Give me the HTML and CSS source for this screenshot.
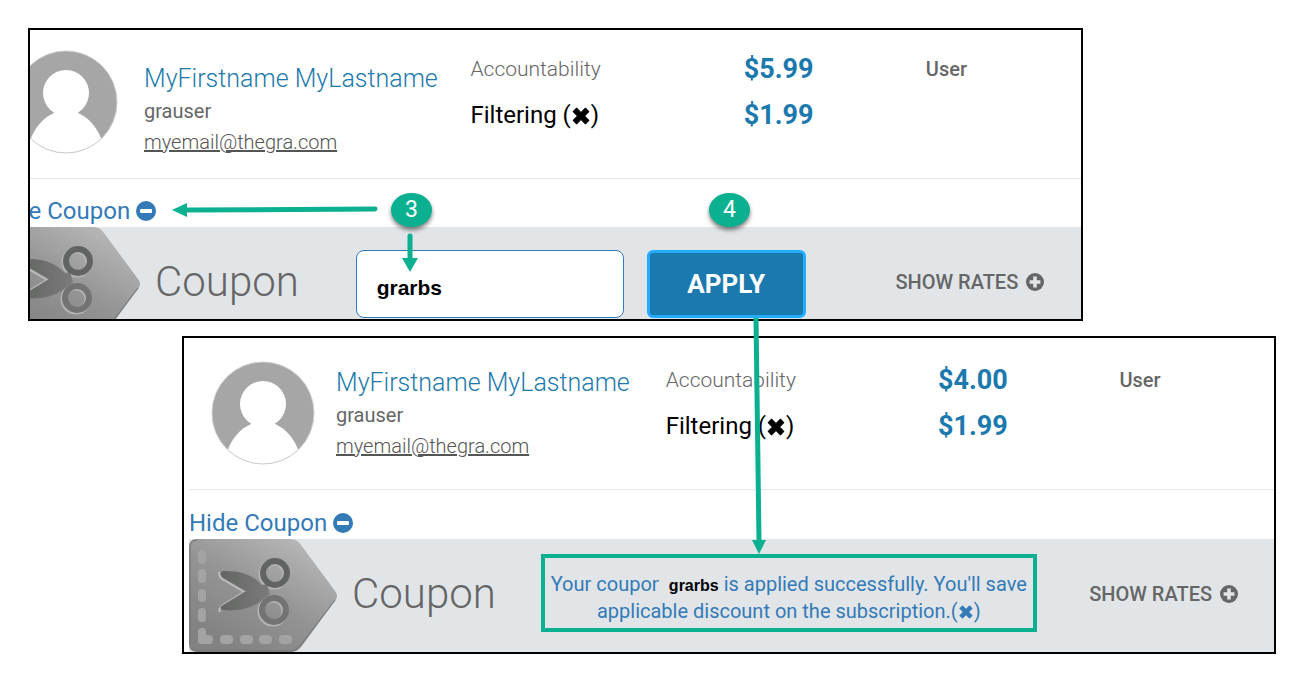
FILE: index.html
```
<!DOCTYPE html>
<html lang="en">
<head>
    <meta charset="UTF-8">
    <meta name="viewport" content="width=device-width, initial-scale=1">
    <title>Apply a coupon</title>
    <link rel="stylesheet" href="styles.css">
</head>
<body>
    <!-- shared icons -->
    <svg class="sprite" aria-hidden="true">
        <defs>
            <linearGradient id="tag-fill" x1="0.2" y1="0.9" x2="0.8" y2="0.1">
                <stop offset="0" stop-color="#828282"/>
                <stop offset="0.5" stop-color="#949494"/>
                <stop offset="1" stop-color="#b4b4b4"/>
            </linearGradient>
            <linearGradient id="blade-fill" x1="0" y1="0" x2="1" y2="0">
                <stop offset="0" stop-color="#646664"/>
                <stop offset="1" stop-color="#7a7b7a"/>
            </linearGradient>
        </defs>
        <symbol id="icon-avatar" viewBox="0 0 104 104">
            <clipPath id="avatar-clip"><circle cx="52" cy="52" r="51"/></clipPath>
            <circle cx="52" cy="52" r="51" fill="#a6a6a6"/>
            <g clip-path="url(#avatar-clip)" fill="#fff">
                <circle cx="52" cy="43" r="23"/>
                <path d="M40 60V63C28 68 20 79 16 91V106H88V91C84 79 76 68 64 63V60Z"/>
            </g>
            <circle cx="52" cy="52" r="51" fill="none" stroke="#ccc"/>
        </symbol>
        <symbol id="icon-tag" viewBox="0 0 148 113">
            <path d="M8 0H102Q108 0 112 6L146 52Q150 57 146 62L112 108Q108 113 102 113H8Q0 113 0 105V8Q0 0 8 0Z" fill="url(#tag-fill)"/>
            <path d="M1 105V8Q1 1 8 1M3 110Q5 112 9 112H102Q107 112 111 107L146 61" fill="none" stroke="#737373" stroke-width="1"/>
            <g fill="#a3a3a3">
                <rect x="9" y="11" width="8" height="14" rx="4"/>
                <rect x="9" y="30" width="8" height="14" rx="4"/>
                <rect x="9" y="50" width="8" height="13" rx="4"/>
                <rect x="9" y="69" width="8" height="14" rx="4"/>
                <path d="M9 93Q9 89 13 89T17 93V96H20Q24 96 24 100.500T20 105H12Q9 105 9 102Z"/>
                <rect x="31" y="96" width="13" height="9" rx="4"/>
                <rect x="51" y="96" width="13" height="9" rx="4"/>
                <rect x="70" y="96" width="13" height="9" rx="4"/>
                <rect x="90" y="96" width="13" height="9" rx="4"/>
            </g>
            <g fill="none" stroke="#b5b5b5" stroke-width="7">
                <circle cx="85" cy="35" r="12"/>
                <circle cx="84" cy="72" r="12"/>
            </g>
            <path d="M30 33Q30 39 35 41L55 53L34 66Q29 70 31 73" fill="none" stroke="#bcbcbc" stroke-width="2"/>
            <path d="M34 32C52 31 65 37 73 46L78 45L81 55L76 59C66 68 52 73 34 71Q29 69 34 66L57 52L34 39Q29 34 34 32Z" fill="url(#blade-fill)"/>
            <circle cx="86" cy="34" r="12" fill="none" stroke="#626463" stroke-width="6"/>
            <circle cx="85" cy="71" r="12" fill="none" stroke="#727372" stroke-width="6"/>
        </symbol>
        <symbol id="icon-minus" viewBox="0 0 20 20">
            <circle cx="10" cy="10" r="10" fill="currentColor"/>
            <rect x="4" y="8" width="12" height="4" rx="1" fill="#fff"/>
        </symbol>
        <symbol id="icon-plus" viewBox="0 0 20 20">
            <circle cx="10" cy="10" r="10" fill="currentColor"/>
            <path d="M8 4H12V8H16V12H12V16H8V12H4V8H8Z" fill="#e1e5e8"/>
        </symbol>
        <symbol id="icon-times" viewBox="0 0 18 18">
            <path d="M5 2L9 6L13 2L16 5L12 9L16 13L13 16L9 12L5 16L2 13L6 9L2 5Z" fill="currentColor" stroke="currentColor" stroke-linejoin="round"/>
        </symbol>
    </svg>

    <main class="page">
        <section class="panel panel-before">
            <div class="panel-body">
                <div class="account">
                    <div class="profile">
                        <svg class="avatar" role="img" aria-label="Profile picture"><use href="#icon-avatar"/></svg>
                        <div class="identity">
                            <div class="name">MyFirstname MyLastname</div>
                            <div class="username">grauser</div>
                            <a class="email" href="mailto:myemail@thegra.com">myemail@thegra.com</a>
                        </div>
                    </div>
                    <div class="services">
                        <div class="service">Accountability</div>
                        <div class="service service-active">Filtering (<svg class="times"><use href="#icon-times"/></svg>)</div>
                    </div>
                    <div class="prices">
                        <div>$5.99</div>
                        <div>$1.99</div>
                    </div>
                    <div class="role">User</div>
                </div>
                <a class="toggle" href="#">Hide Coupon <svg class="icon"><use href="#icon-minus"/></svg></a>
                <form class="coupon-bar">
                    <svg class="tag" aria-hidden="true"><use href="#icon-tag"/></svg>
                    <label class="coupon-title" for="coupon">Coupon</label>
                    <div class="coupon-content">
                        <input class="coupon-input" id="coupon" type="text" value="grarbs">
                        <button class="apply" type="button">APPLY</button>
                    </div>
                    <a class="rates" href="#">SHOW RATES <svg class="icon-small"><use href="#icon-plus"/></svg></a>
                </form>
            </div>
        </section>

        <section class="panel panel-after">
            <div class="panel-body">
                <div class="account">
                    <div class="profile">
                        <svg class="avatar" role="img" aria-label="Profile picture"><use href="#icon-avatar"/></svg>
                        <div class="identity">
                            <div class="name">MyFirstname MyLastname</div>
                            <div class="username">grauser</div>
                            <a class="email" href="mailto:myemail@thegra.com">myemail@thegra.com</a>
                        </div>
                    </div>
                    <div class="services">
                        <div class="service">Accountability</div>
                        <div class="service service-active">Filtering (<svg class="times"><use href="#icon-times"/></svg>)</div>
                    </div>
                    <div class="prices">
                        <div>$4.00</div>
                        <div>$1.99</div>
                    </div>
                    <div class="role">User</div>
                </div>
                <a class="toggle" href="#">Hide Coupon <svg class="icon"><use href="#icon-minus"/></svg></a>
                <div class="coupon-bar">
                    <svg class="tag" aria-hidden="true"><use href="#icon-tag"/></svg>
                    <div class="coupon-title">Coupon</div>
                    <div class="coupon-content">
                        <p class="message">Your coupon<b class="code">grarbs</b>is applied successfully. You'll save<br>applicable discount on the subscription.(<svg class="times times-small"><use href="#icon-times"/></svg>)</p>
                    </div>
                    <a class="rates" href="#">SHOW RATES <svg class="icon-small"><use href="#icon-plus"/></svg></a>
                </div>
            </div>
        </section>

        <!-- step markers and arrows on top of both panels -->
        <svg class="arrows" width="1302" height="682" aria-hidden="true">
            <g stroke="#0ab090" stroke-width="5" stroke-linecap="round">
                <path d="M375 209L186 210"/>
                <path d="M410 236V258"/>
                <path d="M756 318L759 541" stroke-linecap="butt"/>
            </g>
            <g fill="#0ab090">
                <path d="M172 210L187 203V217Z"/>
                <path d="M410 272L402 258H418Z"/>
                <path d="M759 554L752 540H766Z"/>
            </g>
        </svg>
        <span class="step step-3">3</span>
        <span class="step step-4">4</span>
    </main>
</body>
</html>
```
FILE: styles.css
```
* {
    box-sizing: border-box;
}

body {
    margin: 0;
    font-family: Roboto, "Liberation Sans", sans-serif;
    background-color: #fff;
    color: #666;
}

.sprite {
    position: absolute;
    width: 0;
    height: 0;
}

.page {
    position: relative;
    display: flex;
    flex-direction: column;
    gap: 15px;
    padding: 28px 26px 28px 28px;
}

.panel {
    border: 2px solid #000;
    overflow: hidden;
}

.panel-before {
    margin-right: 193px;
}

.panel-after {
    margin-left: 154px;
}

.panel-body {
    margin-left: 5px;
}

/* the first panel is cut off at the left and the bottom */
.panel-before .panel-body {
    margin-left: -38px;
    margin-bottom: -21px;
}

.account {
    display: grid;
    grid-template-columns: 478fr 273fr 182fr 155fr;
    height: 152px;
    padding-top: 23px;
    border-bottom: 1px solid #e5e8ea;
}

.panel-before .account {
    height: 149px;
    padding-top: 20px;
}

.profile {
    display: flex;
    gap: 21px;
    padding-left: 22px;
}

.panel-before .profile {
    gap: 26px;
}

.avatar {
    width: 104px;
    height: 104px;
    flex: none;
}

.identity {
    padding-top: 6px;
    white-space: nowrap;
}

.panel-before .identity {
    padding-top: 13px;
}

.name {
    font-size: 25px;
    font-weight: 300;
    line-height: 32px;
    color: #1b79ad;
}

.username {
    font-size: 20px;
    line-height: 33px;
}

.email {
    display: block;
    font-size: 20px;
    font-weight: 300;
    line-height: 28px;
    color: #555;
}

.services,
.prices {
    line-height: 46px;
    margin-top: -4px;
    white-space: nowrap;
}

.service {
    font-size: 21px;
    font-weight: 300;
}

.service-active {
    font-size: 24px;
    font-weight: 400;
    color: #000;
}

.times {
    width: 20px;
    height: 20px;
    vertical-align: -3px;
}

.times-small {
    width: 16px;
    height: 16px;
    vertical-align: -2px;
}

.prices {
    font-size: 27px;
    font-weight: 700;
    color: #1b79ad;
}

.role {
    margin-top: -4px;
    font-size: 20px;
    font-weight: 500;
    line-height: 46px;
}

.toggle {
    display: flex;
    align-items: center;
    gap: 6px;
    height: 48px;
    padding-top: 16px;
    font-size: 24px;
    color: #337ab7;
    text-decoration: none;
}

.panel-after .toggle {
    height: 49px;
}

.icon {
    width: 20px;
    height: 20px;
}

.icon-small {
    width: 18px;
    height: 18px;
}

.coupon-bar {
    display: grid;
    grid-template-columns: 148px 204fr 549fr 185fr;
    align-items: center;
    background-color: #e1e5e8;
}

.tag {
    width: 148px;
    height: 113px;
}

.coupon-title {
    padding: 0 0 4px 15px;
    font-size: 42px;
    font-weight: 300;
    line-height: 48px;
}

.coupon-content {
    display: flex;
    gap: 23px;
}

.coupon-input {
    width: 268px;
    height: 68px;
    margin-left: 11px;
    padding: 8px 20px 0;
    border: 1px solid #337ab7;
    border-radius: 8px;
    font: bold 21px "Liberation Sans", sans-serif;
    color: #000;
    background-color: #fff;
}

.apply {
    width: 159px;
    height: 68px;
    border: 3px solid #22adff;
    border-radius: 6px;
    font: 700 26px Roboto, sans-serif;
    color: #fff;
    background-color: #1b79ad;
}

.rates {
    display: flex;
    align-items: center;
    gap: 8px;
    padding-bottom: 4px;
    font-size: 20px;
    font-weight: 500;
    color: #666;
    text-decoration: none;
    white-space: nowrap;
}

.message {
    width: 496px;
    margin: 0 0 6px;
    padding: 13px 0 3px;
    border: 4px solid #0ab090;
    font-size: 20px;
    line-height: 27px;
    text-align: center;
    white-space: nowrap;
    color: #337ab7;
}

.code {
    margin-left: -4px;
    padding: 0 5px 0 10px;
    font: bold 16px "Liberation Sans", sans-serif;
    color: #000;
    background-color: #e1e5e8;
}

.arrows {
    position: absolute;
    top: 0;
    left: 0;
    pointer-events: none;
}

.step {
    position: absolute;
    top: 193px;
    width: 41px;
    height: 34px;
    border-radius: 50%;
    background-color: #0ab090;
    box-shadow: 0 3px 4px rgba(0, 0, 0, 0.5);
    font-size: 23px;
    line-height: 34px;
    text-align: center;
    color: #fff;
}

.step-3 {
    left: 391px;
}

.step-4 {
    left: 709px;
}
```
